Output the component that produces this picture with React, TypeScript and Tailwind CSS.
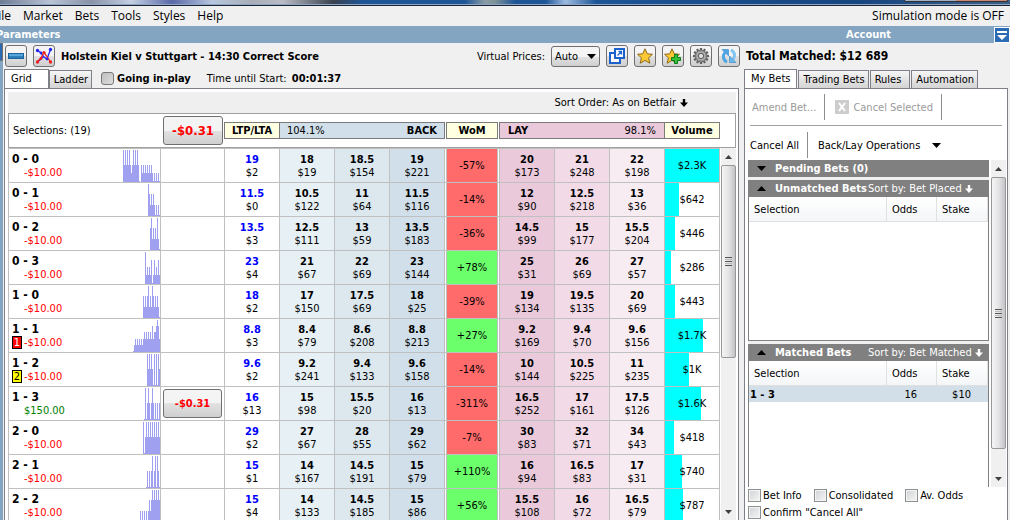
import type { ReactNode } from 'react'

interface Price {
  odds: string
  size: string
}

interface Runner {
  name: string
  profit: string
  badge?: number
  cashOut?: string
  chart: number[]
  prices: Price[]
  wom: string
  volume: string
  share: number
}

const prices = (text: string): Price[] =>
  text.split(' ').map((pair) => {
    const [odds, size] = pair.split('/')
    return { odds, size: `$${size}` }
  })

// prices: last traded, three back columns, three lay columns
const runners: Runner[] = [
  {
    name: '0 - 0', profit: '-$10.00', wom: '-57%', volume: '$2.3K', share: 100,
    prices: prices('19/2 18/19 18.5/154 19/221 20/173 21/248 22/198'),
    chart: [32, 17, 32, 17, 32, 17, 32, 17, 9, 17, 32, 17, 32, 17, 32, 17, 1, 0, 17, 9, 17, 9, 17, 9, 17, 9, 17, 9, 17, 9, 1, 9, 1, 9, 1, 9, 1],
  },
  {
    name: '0 - 1', profit: '-$10.00', wom: '-14%', volume: '$642', share: 26,
    prices: prices('11.5/0 10.5/122 11/64 11.5/116 12/90 12.5/218 13/36'),
    chart: [32, 22, 11, 22, 11, 22, 11, 1, 11, 1, 11, 1],
  },
  {
    name: '0 - 2', profit: '-$10.00', wom: '-36%', volume: '$446', share: 19,
    prices: prices('13.5/3 12.5/111 13/59 13.5/183 14.5/99 15/177 15.5/204'),
    chart: [22, 32, 11, 22, 11, 22, 11, 32, 11, 1],
  },
  {
    name: '0 - 3', profit: '-$10.00', wom: '+78%', volume: '$286', share: 11,
    prices: prices('23/4 21/67 22/69 23/144 25/31 26/69 27/57'),
    chart: [32, 9, 17, 9, 17, 9, 24, 1, 9, 24, 9, 17, 9, 24, 9],
  },
  {
    name: '1 - 0', profit: '-$10.00', wom: '-39%', volume: '$443', share: 19,
    prices: prices('18/2 17/150 17.5/69 18/25 19/134 19.5/135 20/69'),
    chart: [22, 11, 22, 11, 22, 32, 11, 22, 11, 32, 22, 11, 22, 11, 22, 11, 1],
  },
  {
    name: '1 - 1', profit: '-$10.00', badge: 1, wom: '+27%', volume: '$1.7K', share: 70,
    prices: prices('8.8/3 8.4/79 8.6/208 8.8/213 9.2/169 9.4/70 9.6/156'),
    chart: [1, 7, 13, 7, 13, 7, 13, 7, 13, 7, 13, 20, 13, 20, 13, 20, 13, 20, 13, 26, 13, 20, 20, 26, 32, 26, 13],
  },
  {
    name: '1 - 2', profit: '-$10.00', badge: 2, wom: '-14%', volume: '$1K', share: 44,
    prices: prices('9.6/2 9.2/241 9.4/133 9.6/158 10/144 10.5/225 11/235'),
    chart: [32, 17, 32, 17, 32, 17, 1, 32, 1, 32, 1, 32, 17],
  },
  {
    name: '1 - 3', profit: '$150.00', cashOut: '-$0.31', wom: '-311%', volume: '$1.6K', share: 67,
    prices: prices('16/13 15/98 15.5/20 16/13 16.5/252 17/161 17.5/126'),
    chart: [1, 32, 1, 17, 32, 17, 1, 17, 32, 17, 1, 17, 1, 17, 1, 17],
  },
  {
    name: '2 - 0', profit: '-$10.00', wom: '-7%', volume: '$418', share: 17,
    prices: prices('29/2 27/67 28/55 29/62 30/83 32/71 34/43'),
    chart: [32, 1, 17, 32, 17, 32, 17, 32, 17, 32, 17, 32, 17, 32, 17, 32, 17],
  },
  {
    name: '2 - 1', profit: '-$10.00', wom: '+110%', volume: '$740', share: 31,
    prices: prices('15/1 14/167 14.5/191 15/79 16/94 16.5/83 17/31'),
    chart: [1, 17, 1, 17, 1, 17, 32, 1, 17, 32, 1, 32, 17, 1],
  },
  {
    name: '2 - 2', profit: '-$10.00', wom: '+56%', volume: '$787', share: 33,
    prices: prices('15/4 14/133 14.5/185 15/86 15.5/108 16/72 16.5/79'),
    chart: [11, 1, 11, 1, 11, 1, 11, 1, 11, 22, 11, 22, 32, 22, 32, 22, 32, 22, 32, 22],
  },
]

const priceColors = [
  'bg-white',
  'bg-[#e7f0f4]',
  'bg-[#dce7ee]',
  'bg-[#d0dfe9]',
  'bg-[#e9c9da]',
  'bg-[#f2dbe7]',
  'bg-[#f8ecf3]',
]

const bevel = 'border border-[#707070] rounded-[3px] bg-linear-to-b from-[#f4f4f4] from-50% via-[#e2e2e2] via-50% to-[#cfcfcf]'

function Triangle({ up = false, className = '' }: { up?: boolean; className?: string }) {
  return (
    <svg width="9" height="5" viewBox="0 0 9 5" className={className} aria-hidden="true">
      <path d={up ? 'M0 5 4.5 0 9 5Z' : 'M0 0H9L4.5 5Z'} fill="currentColor" />
    </svg>
  )
}

function DownArrow() {
  return (
    <svg width="8" height="8" viewBox="0 0 8 8" className="shrink-0" aria-hidden="true">
      <path d="M2.8 0H5.2V3.5H8L4 8 0 3.5H2.8Z" fill="currentColor" />
    </svg>
  )
}

function IconButton({ label, children }: { label: string; children: ReactNode }) {
  return (
    <button aria-label={label} className={`flex size-[22px] shrink-0 items-center justify-center ${bevel}`}>
      {children}
    </button>
  )
}

function Star() {
  return (
    <path
      d="M8 .8 10.3 5.8 15.5 6.3 11.6 9.8 12.8 15.2 8 12.4 3.2 15.2 4.4 9.8 .5 6.3 5.7 5.8Z"
      fill="#fcc833"
      stroke="#8d6a1c"
      strokeWidth="1"
      strokeLinejoin="round"
    />
  )
}

function GearIcon() {
  return (
    <svg width="18" height="18" viewBox="0 0 18 18" aria-hidden="true">
      {[0, 30, 60, 90, 120, 150].map((angle) => (
        <rect key={angle} x="7.9" y="1" width="2.2" height="16" fill="#606060" transform={`rotate(${angle} 9 9)`} />
      ))}
      <circle cx="9" cy="9" r="6" fill="#929292" stroke="#666" strokeWidth=".8" />
      <circle cx="9" cy="9" r="4" fill="none" stroke="#b5b5b5" strokeWidth="1" />
      <circle cx="9" cy="9" r="2.6" fill="#e2e2e2" stroke="#5a5a5a" strokeWidth="1" />
    </svg>
  )
}

function RefreshIcon() {
  return (
    <svg width="18" height="18" viewBox="0 0 18 18" fill="none" aria-hidden="true">
      <path d="M7 15C3 13 2.4 8.5 5 5.5" stroke="#4ea6e2" strokeWidth="3" />
      <path d="M2 2.5H8.5V9Z" fill="#4ea6e2" stroke="#2f86cf" strokeWidth=".6" />
      <path d="M11 3C15 5 15.6 9.5 13 12.5" stroke="#7fc4f2" strokeWidth="3" />
      <path d="M16 15.5H9.5V9Z" fill="#6ab8ec" stroke="#2f86cf" strokeWidth=".6" />
    </svg>
  )
}

function Tab({ label, active = false, wide = false }: { label: string; active?: boolean; wide?: boolean }) {
  const padding = active ? (wide ? 'pr-4' : 'pr-1.5') : wide ? 'pr-2' : 'pr-[3px]'

  return (
    <button
      role="tab"
      aria-selected={active}
      className={`border border-b-0 border-[#7f7f88] text-left ${
        active ? '-mb-px h-5 bg-white pb-0.5 pl-1.5' : 'h-[18px] bg-linear-to-b from-[#f5f5f5] to-[#d4d4d4] pl-1'
      } ${padding}`}
    >
      {label}
    </button>
  )
}

function Scrollbar({ thumb }: { thumb: string }) {
  return (
    <div className="flex w-[15px] shrink-0 flex-col items-center bg-[#f0f0f0]">
      <div className="flex h-[17px] shrink-0 items-center text-[#404040]">
        <Triangle up className="h-1 w-[7px]" />
      </div>
      <div className="min-h-0 w-full flex-1">
        <div
          className={`flex w-full flex-col items-center justify-center gap-px rounded-xs border border-[#979797] bg-linear-to-r from-[#f5f5f5] via-[#e4e4e6] to-[#c4c4c8] ${thumb}`}
        >
          <i className="h-px w-[7px] bg-[#555]" />
          <i className="h-px w-[7px] bg-[#bbb]" />
          <i className="h-px w-[7px] bg-[#555]" />
          <i className="h-px w-[7px] bg-[#bbb]" />
          <i className="h-px w-[7px] bg-[#555]" />
        </div>
      </div>
      <div className="flex h-[17px] shrink-0 items-center text-[#404040]">
        <Triangle className="h-1 w-[7px]" />
      </div>
    </div>
  )
}

function Chart({ values }: { values: number[] }) {
  return (
    <svg width={values.length} height="32" shapeRendering="crispEdges" className="shrink-0" aria-hidden="true">
      {values.map((value, index) => (
        <rect key={index} x={index} y={32 - value} width="1" height={value} fill="#a0a0f0" />
      ))}
    </svg>
  )
}

function RunnerRow({ runner }: { runner: Runner }) {
  return (
    <tr className="h-[34px] text-center">
      <td className="border-r border-b border-[#c0c0c0] p-0 text-left">
        <div className="flex h-[33px] items-end justify-between pl-[3px]">
          <div className="self-start pt-1">
            <div className="text-[12px] leading-[13px] font-bold">{runner.name}</div>
            <div className="flex gap-0.5">
              <span
                className={`box-border h-[13px] w-[10px] text-center leading-[11px] ${
                  runner.badge === 1
                    ? 'border border-black bg-[#ff0000] text-white'
                    : runner.badge === 2
                      ? 'border border-black bg-[#ffff00]'
                      : ''
                }`}
              >
                {runner.badge}
              </span>
              <span className={runner.profit.startsWith('-') ? 'text-[#ff0000]' : 'text-[#008000]'}>{runner.profit}</span>
            </div>
          </div>
          <Chart values={runner.chart} />
        </div>
      </td>
      <td className="border-r border-b border-[#c0c0c0] px-0.5 py-0">
        {runner.cashOut && (
          <button className={`h-[29px] w-full font-bold text-[#ff0000] ${bevel}`}>{runner.cashOut}</button>
        )}
      </td>
      {runner.prices.slice(0, 4).map((price, index) => (
        <PriceCell key={index} price={price} index={index} />
      ))}
      <td className="border-r border-b border-[#c0c0c0] p-0">
        <div
          className={`mx-px flex h-[33px] items-center justify-center border-x border-[#c0c0c0] ${
            runner.wom.startsWith('-') ? 'bg-[#ff6b6b]' : 'bg-[#6bff6b]'
          }`}
        >
          {runner.wom}
        </div>
      </td>
      {runner.prices.slice(4).map((price, index) => (
        <PriceCell key={index} price={price} index={index + 4} />
      ))}
      <td className="border-r border-b border-[#c0c0c0] p-0">
        <div className="grid h-[33px] items-center">
          <div className="col-start-1 row-start-1 h-full bg-[#00ffff]" style={{ width: `${runner.share}%` }} />
          <span className="col-start-1 row-start-1">{runner.volume}</span>
        </div>
      </td>
    </tr>
  )
}

function PriceCell({ price, index }: { price: Price; index: number }) {
  return (
    <td className={`border-r border-b border-[#c0c0c0] p-0 ${priceColors[index]}`}>
      <div className={index === 0 ? 'font-bold text-[#0000ff]' : 'font-bold'}>{price.odds}</div>
      <div>{price.size}</div>
    </td>
  )
}

function MarketPanel() {
  return (
    <section className="flex min-w-0 flex-1 flex-col">
      <div className="flex h-[26px] shrink-0 items-center gap-1.5 pl-px">
        <IconButton label="Collapse">
          <svg width="16" height="6" viewBox="0 0 16 6" aria-hidden="true">
            <rect x=".5" y=".5" width="15" height="5" fill="#55a6dc" stroke="#1d5f98" />
            <path d="M1 3H15V5H1Z" fill="#2b7fbd" />
          </svg>
        </IconButton>
        <IconButton label="Price chart">
          <svg width="18" height="18" viewBox="0 0 18 18" fill="none" aria-hidden="true">
            <path d="M2.5 3.5 6 6 9 10 12 12 15.5 2.5M2.5 15 6 12 9 9" stroke="#2424f0" strokeWidth="1.3" />
            <path d="M2 15 6 11 9 5.5 12 9.5 15.5 15" stroke="#f02020" strokeWidth="1.3" />
            <g fill="#2424f0">
              <circle cx="2.5" cy="3.5" r="1.7" />
              <circle cx="6" cy="6" r="1.4" />
              <circle cx="15.5" cy="2.5" r="1.7" />
              <circle cx="12" cy="12" r="1.4" />
            </g>
            <g fill="#f02020">
              <circle cx="2.5" cy="15" r="1.7" />
              <circle cx="6" cy="11.5" r="1.4" />
              <circle cx="9" cy="5.5" r="1.6" />
              <circle cx="15.5" cy="15" r="1.7" />
            </g>
          </svg>
        </IconButton>
        <h1 className="min-w-0 flex-1 truncate font-bold">Holstein Kiel v Stuttgart - 14:30 Correct Score</h1>
        <label htmlFor="virtual-prices">Virtual Prices:</label>
        <div className="grid w-[49px] items-center">
          <select
            id="virtual-prices"
            className={`col-start-1 row-start-1 h-[21px] w-full appearance-none pl-[3px] ${bevel}`}
          >
            <option>Auto</option>
          </select>
          <Triangle className="pointer-events-none col-start-1 row-start-1 mr-1 justify-self-end" />
        </div>
        <IconButton label="Open in new window">
          <svg width="18" height="18" viewBox="0 0 18 18" fill="none" aria-hidden="true">
            <path d="M7.5 6H2V16H12V11.5" fill="#fff" stroke="#1c62cc" strokeWidth="2" />
            <path d="M7 2H16V11H7Z" fill="#fff" stroke="#1c62cc" strokeWidth="2" />
            <path d="M9.5 8.5 13 5M10.5 4.5H13.5V7.5" stroke="#1c62cc" strokeWidth="1.3" />
          </svg>
        </IconButton>
        <IconButton label="Favourites">
          <svg width="16" height="16" viewBox="0 0 16 16" aria-hidden="true">
            <Star />
          </svg>
        </IconButton>
        <IconButton label="Add to favourites">
          <svg width="18" height="16" viewBox="0 0 18 16" aria-hidden="true">
            <Star />
            <path d="M10.5 6.5H13.5V9.5H16.5V12.5H13.5V15.5H10.5V12.5H7.5V9.5H10.5Z" fill="#33c233" stroke="#0d7a1c" />
          </svg>
        </IconButton>
        <IconButton label="Settings">
          <GearIcon />
        </IconButton>
        <IconButton label="Refresh">
          <RefreshIcon />
        </IconButton>
      </div>

      <div className="flex h-[19px] shrink-0 items-end" role="tablist">
        <Tab label="Grid" active wide />
        <Tab label="Ladder" />
        <label className="flex h-full items-center gap-[3px] pl-[9px] font-bold">
          <input
            type="checkbox"
            className="size-[13px] appearance-none rounded-[3px] border border-[#777] bg-linear-to-br from-[#bdbdbd] to-[#dedede]"
          />
          Going in-play
        </label>
        <p className="h-full pl-4 leading-5">
          Time until Start: <b className="pl-0.5">00:01:37</b>
        </p>
      </div>

      <div className="mr-px flex min-h-0 flex-1 flex-col border border-b-0 border-[#7f7f88] bg-white pt-[3px] pr-0.5 pl-[3px]">
        <div className="flex h-[21px] shrink-0 items-center justify-end gap-1 bg-[#efefef] pr-12">
          Sort Order: As on Betfair
          <DownArrow />
        </div>
        <div className="flex h-[35px] shrink-0 items-center border border-[#a0a0a0] pr-[15px]">
          <div className="min-w-0 flex-1 pl-1">Selections: (19)</div>
          <div className="w-16 px-0.5">
            <button className={`h-[29px] w-full text-[13px] font-bold text-[#ff0000] ${bevel}`}>-$0.31</button>
          </div>
          <div className="-ml-px h-[17px] w-14 border border-[#7b7b7b] bg-[#ffffe1] text-center leading-[15px] font-bold">
            LTP/LTA
          </div>
          <div className="-ml-px flex h-[17px] w-[166px] justify-between border border-[#7b7b7b] bg-[#d0dfe9] px-[7px] leading-[15px]">
            <span>104.1%</span>
            <b>BACK</b>
          </div>
          <div className="mx-px h-[17px] w-[52px] border border-[#7b7b7b] bg-[#ffffe1] text-center leading-[15px] font-bold">
            WoM
          </div>
          <div className="flex h-[17px] w-[166px] justify-between border border-[#7b7b7b] bg-[#e9c9da] px-2 leading-[15px]">
            <b>LAY</b>
            <span>98.1%</span>
          </div>
          <div className="-ml-px h-[17px] w-14 border border-[#7b7b7b] bg-[#ffffe1] text-center leading-[15px] font-bold">
            Volume
          </div>
        </div>
        <div className="flex min-h-0 flex-1 overflow-hidden border-l border-[#c0c0c0]">
          <div className="min-w-0 flex-1 overflow-hidden">
            <table className="w-full table-fixed border-separate border-spacing-0 border-t border-[#c0c0c0]">
              <colgroup>
                <col />
                <col className="w-16" />
                <col span={9} className="w-[55px]" />
              </colgroup>
              <tbody>
                {runners.map((runner) => (
                  <RunnerRow key={runner.name} runner={runner} />
                ))}
              </tbody>
            </table>
          </div>
          <div className="ml-px flex">
            <Scrollbar thumb="h-[57%]" />
          </div>
        </div>
      </div>
    </section>
  )
}

function BetTable({ children }: { children?: ReactNode }) {
  return (
    <table className="w-full table-fixed border-separate border-spacing-0">
      <thead>
        <tr className="h-[25px] bg-linear-to-b from-white to-[#f3f5f7] text-left">
          <th className="border-r border-b border-[#dfe0e2] py-0 pl-[5px] font-normal">Selection</th>
          <th className="w-[50px] border-r border-b border-[#dfe0e2] py-0 pl-[5px] font-normal">Odds</th>
          <th className="w-[51px] border-r border-b border-[#dfe0e2] py-0 pl-[5px] font-normal">Stake</th>
        </tr>
      </thead>
      <tbody>{children}</tbody>
    </table>
  )
}

function BetHeading({ title, sort, up = false }: { title: string; sort?: string; up?: boolean }) {
  return (
    <div className="flex h-[17px] shrink-0 items-center bg-[#808080] pl-[9px] text-white">
      <Triangle up={up} className="mr-[9px] shrink-0 text-black" />
      <h2 className="w-[93px] shrink-0 font-bold whitespace-nowrap">{title}</h2>
      {sort && (
        <span className="flex items-center gap-[3px] whitespace-nowrap">
          {sort}
          <DownArrow />
        </span>
      )}
    </div>
  )
}

function CheckOption({ label }: { label: string }) {
  return (
    <label className="flex h-[17px] items-center gap-0.5">
      <input
        type="checkbox"
        className="size-[13px] appearance-none border border-[#8e8f8f] bg-linear-to-br from-[#cfd2d6] to-[#f6f6f6] outline outline-offset-[-2px] outline-[#f4f4f4]"
      />
      {label}
    </label>
  )
}

function AccountPanel() {
  return (
    <section className="mr-0.5 ml-1 flex w-[264px] shrink-0 flex-col">
      <div className="h-[26px] shrink-0 pl-0.5 text-[12px] leading-[26px] font-bold">Total Matched: $12 689</div>
      <div className="flex h-[19px] shrink-0 items-end gap-px" role="tablist">
        <Tab label="My Bets" active />
        <Tab label="Trading Bets" />
        <Tab label="Rules" wide />
        <Tab label="Automation" />
      </div>
      <div className="flex min-h-0 flex-1 flex-col border border-b-0 border-[#7f7f88] bg-white pr-px pl-[3px]">
        <div className="mr-1 ml-0.5 flex h-[37px] shrink-0 items-center border-b border-[#a0a0a0] text-[#9a9a9a]">
          <button className="h-[26px] border-r border-[#8d8d8d] pr-2 pl-0.5">Amend Bet...</button>
          <button className="flex h-[26px] items-center gap-1 border-r border-[#8d8d8d] pr-2 pl-2.5">
            <svg width="14" height="14" viewBox="0 0 14 14" aria-hidden="true">
              <rect width="14" height="14" fill="#cdcdcd" />
              <path d="M4 3 10 11M10 3 4 11" stroke="#fff" strokeWidth="2" />
            </svg>
            Cancel Selected
          </button>
        </div>
        <div className="flex h-[34px] shrink-0 items-center pt-1">
          <button className="h-[26px] border-r border-[#8d8d8d] pr-2 pl-0.5">Cancel All</button>
          <button className="flex items-center gap-3 pl-2.5">
            Back/Lay Operations
            <Triangle />
          </button>
        </div>
        <div className="flex min-h-0 flex-1 gap-0.5">
          <div className="flex min-w-0 flex-1 flex-col bg-[#f0f0f0]">
            <BetHeading title="Pending Bets (0)" />
            <div className="mt-[3px] h-[161px] shrink-0 border border-t-0 border-[#808080] bg-white">
              <div className="-mx-px">
                <BetHeading title="Unmatched Bets" sort="Sort by: Bet Placed" up />
              </div>
              <BetTable />
            </div>
            <div className="mt-[3px] min-h-0 flex-1 border-x border-[#808080] bg-white">
              <div className="-mx-px">
                <BetHeading title="Matched Bets" sort="Sort by: Bet Matched" up />
              </div>
              <BetTable>
                <tr className="h-4 bg-[#d2dfe8]">
                  <td className="px-px py-0 font-bold">1 - 3</td>
                  <td className="px-0 py-0 pr-5 text-right">16</td>
                  <td className="px-0 py-0 pr-[17px] text-right">$10</td>
                </tr>
              </BetTable>
            </div>
          </div>
          <Scrollbar thumb="h-[93%]" />
        </div>
        <div className="flex h-[33px] shrink-0 flex-wrap content-start gap-x-3">
          <CheckOption label="Bet Info" />
          <CheckOption label="Consolidated" />
          <CheckOption label="Av. Odds" />
          <CheckOption label={'Confirm "Cancel All"'} />
        </div>
      </div>
    </section>
  )
}

export default function App() {
  return (
    <div className="flex h-screen flex-col overflow-hidden bg-[#f0f0f0] font-['DejaVu_Sans_Condensed','DejaVu_Sans',sans-serif] text-[11px] leading-[13px] text-black">
      <div className="flex h-[6px] shrink-0 justify-end border-b border-[#1b2336] bg-[linear-gradient(90deg,#6f7c95_0%,#b9c3d6_5%,#8892a8_9%,#c4cfe4_13%,#5a69a8_17%,#b7c6de_21%,#a9aeb8_25%,#b9bcc4_28%,#3a4250_33%,#1d5597_36%,#1d5597_46%,#8a9ba6_48%,#7f9398_49%,#1d5597_51%,#1d5597_54%,#9dbbe0_56%,#1d5597_59%,#174580_85%,#3d5f86_100%)] pr-0.5 shadow-[inset_0_-1px_0_#8ea6c0]">
        <div className="flex h-0.5 w-[104px] overflow-hidden rounded-b-[3px] border border-t-0 border-[#333]">
          <i className="flex-1 bg-[#9fb2c6]" />
          <i className="flex-1 bg-[#9fb2c6]" />
          <i className="flex-2 bg-[#c98878]" />
        </div>
      </div>
      <nav className="flex h-5 shrink-0 items-center gap-3 overflow-hidden font-['Open_Sans','Noto_Sans',sans-serif] text-[12px] leading-5">
        <button className="-ml-2">File</button>
        <button>Market</button>
        <button>Bets</button>
        <button>Tools</button>
        <button>Styles</button>
        <button>Help</button>
        <span className="ml-auto pr-1.5">Simulation mode is OFF</span>
      </nav>
      <div className="flex h-[17px] shrink-0 items-center overflow-hidden bg-[#84a5c1] font-bold text-white">
        <span className="-ml-1 flex-1">Parameters</span>
        <span className="w-[148px]">Account</span>
        <button aria-label="Hide account" className="flex size-4 items-center justify-center border border-white bg-[#2a6bb3]">
          <svg width="10" height="10" viewBox="0 0 10 10" fill="#fff" aria-hidden="true">
            <path d="M0 1H10V3H0ZM0 5H10L5 10Z" />
          </svg>
        </button>
      </div>
      <div className="flex min-h-0 flex-1">
        <div className="mr-px w-[3px] shrink-0 bg-[#84a5c1]">
          <div className="h-[18px] w-[3px] border-y border-r border-[#707070] bg-[#2a6bb3]" />
        </div>
        <MarketPanel />
        <AccountPanel />
      </div>
    </div>
  )
}
